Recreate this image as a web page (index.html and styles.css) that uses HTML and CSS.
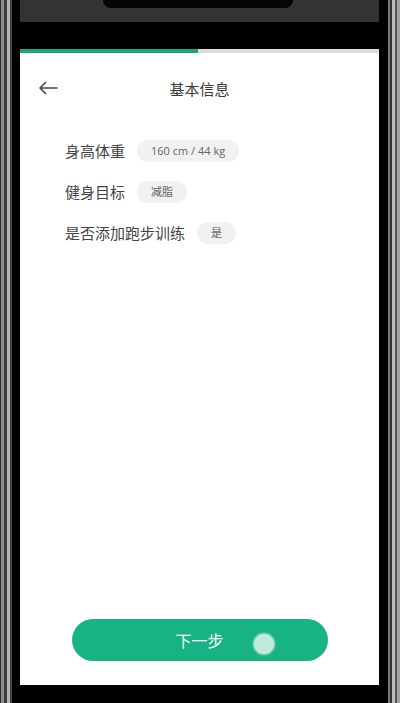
FILE: index.html
```html
<!DOCTYPE html>
<html lang="zh">
<head>
<meta charset="utf-8">
<title>基本信息</title>
<link rel="stylesheet" href="styles.css">
</head>
<body>
<div class="phone">
  <div class="bezel bezel-left"></div>
  <div class="screen">
    <div class="top-band">
      <div class="notch"></div>
    </div>
    <div class="status-black"></div>
    <div class="progress"><div class="progress-fill"></div></div>
    <main class="page">
      <header class="header">
        <svg class="back" width="20" height="14" viewBox="0 0 20 14" aria-hidden="true">
          <path d="M19 7H2M7.5 1.5L2 7l5.5 5.5" fill="none" stroke="#444" stroke-width="1.6" stroke-linecap="round" stroke-linejoin="round"/>
        </svg>
        <h1 class="title">基本信息</h1>
      </header>
      <section class="info">
        <div class="row"><span class="label">身高体重</span><span class="pill">160 cm / 44 kg</span></div>
        <div class="row"><span class="label">健身目标</span><span class="pill">减脂</span></div>
        <div class="row"><span class="label">是否添加跑步训练</span><span class="pill">是</span></div>
      </section>
      <div class="action">
        <button class="next">下一步<span class="touch"></span></button>
      </div>
    </main>
    <div class="bottom-black"></div>
  </div>
  <div class="bezel bezel-right"></div>
</div>
</body>
</html>
```

FILE: styles.css
```css
html, body {
  margin: 0;
  padding: 0;
  width: 400px;
  height: 703px;
  overflow: hidden;
  background: #000;
  font-family: "Noto Sans CJK SC", "Noto Sans", sans-serif;
}

.phone {
  display: flex;
  width: 400px;
  height: 703px;
}

.bezel {
  flex: none;
  height: 100%;
}

.bezel-left {
  width: 20px;
  background: linear-gradient(to right,
    #2a2a2a 0, #2a2a2a 1px,
    #8c8c8c 1px, #8c8c8c 4px,
    #3c3c3c 4px, #3c3c3c 7px,
    #b4b4b4 7px, #b4b4b4 10px,
    #444 10px, #444 12px,
    #000 12px, #000 20px);
}

.bezel-right {
  width: 21px;
  background: linear-gradient(to right,
    #000 0, #000 9px,
    #7a7a7a 9px, #7a7a7a 11px,
    #333 11px, #333 13px,
    #bdbdbd 13px, #bdbdbd 16px,
    #555 16px, #555 18px,
    #9ea4ac 18px, #9ea4ac 21px);
}

.screen {
  flex: 1;
  display: flex;
  flex-direction: column;
  min-width: 0;
}

.top-band {
  height: 22px;
  background: #333;
  display: flex;
  justify-content: center;
}

.notch {
  width: 190px;
  height: 8px;
  margin-left: -4px;
  background: #050505;
  border-radius: 0 0 12px 12px;
}

.status-black {
  height: 27px;
  background: #000;
}

.progress {
  height: 4px;
  background: #dcdcdc;
  display: flex;
}

.progress-fill {
  width: 178px;
  background: #1aa67d;
  margin-right: 2px;
}

.page {
  flex: 1;
  background: #fff;
  display: flex;
  flex-direction: column;
}

.header {
  height: 70px;
  display: flex;
  align-items: center;
  justify-content: center;
  position: relative;
}

.back {
  position: absolute;
  left: 18px;
  top: 28px;
}

.title {
  margin: 0;
  font-size: 15px;
  font-weight: 400;
  color: #3a3a3a;
}

.info {
  display: flex;
  flex-direction: column;
  gap: 19px;
  padding: 17px 0 0 45px;
}

.row {
  display: flex;
  align-items: center;
  gap: 12px;
  height: 22px;
}

.label {
  font-size: 15px;
  color: #444;
  line-height: 22px;
}

.pill {
  height: 22px;
  line-height: 22px;
  padding: 0 14px;
  border-radius: 11px;
  background: #f1f1f1;
  font-family: "Open Sans", "Noto Sans CJK SC", sans-serif;
  font-size: 11px;
  color: #666;
}

.action {
  margin-top: auto;
  display: flex;
  justify-content: center;
  padding-bottom: 24px;
}

.next {
  position: relative;
  width: 256px;
  height: 42px;
  border: 0;
  border-radius: 21px;
  background: #18b385;
  color: #fff;
  font-family: "Noto Sans CJK SC", "Noto Sans", sans-serif;
  font-size: 16px;
  padding: 0;
}

.touch {
  position: absolute;
  left: 182px;
  top: 15px;
  width: 20px;
  height: 20px;
  border-radius: 50%;
  background: #bfe9d8;
  box-shadow: 0 0 2px 1px rgba(220, 245, 235, 0.7);
}

.bottom-black {
  height: 18px;
  background: #000;
}
```
